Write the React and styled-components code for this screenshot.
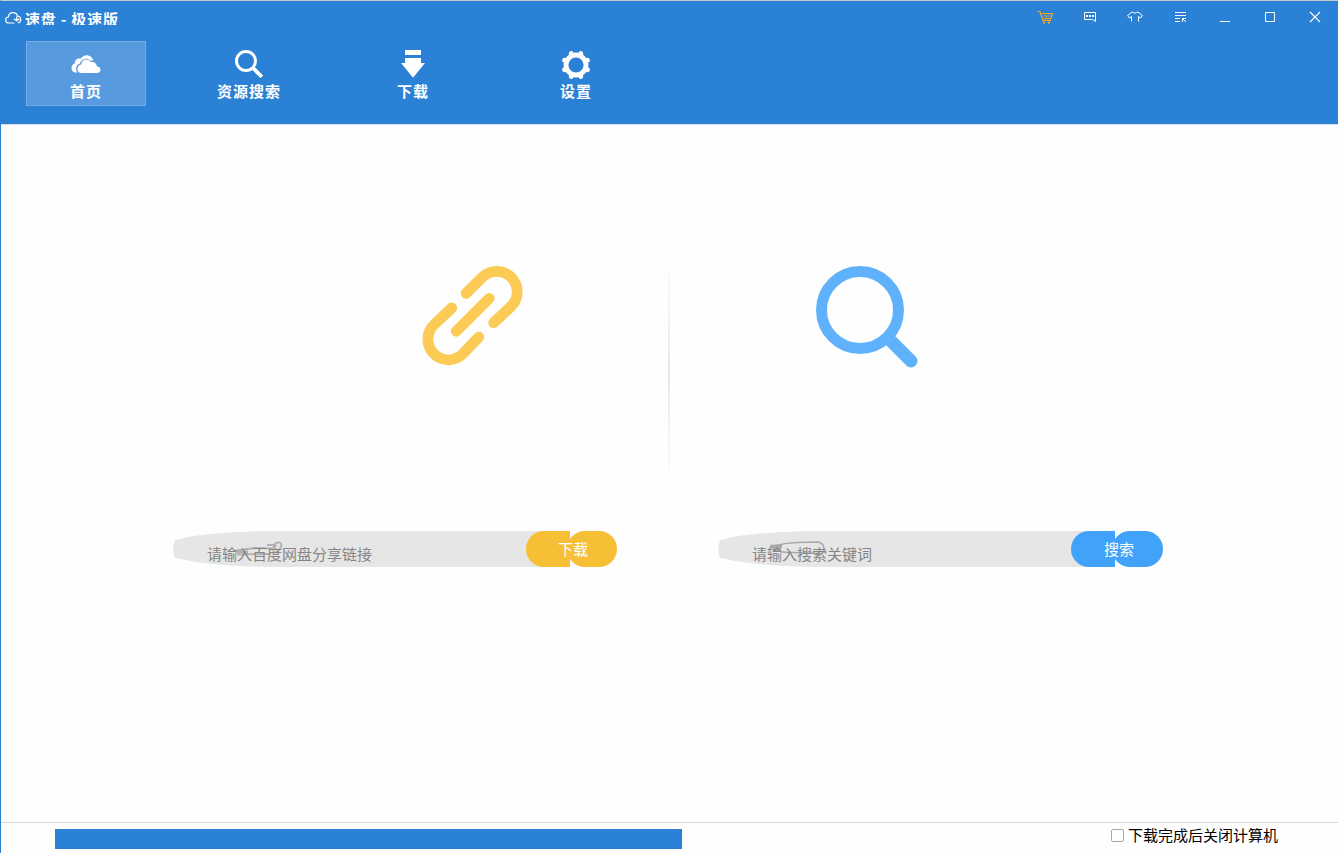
import React from "react";
import styled, { createGlobalStyle } from "styled-components";

const GlobalStyle = createGlobalStyle`
  * { box-sizing: border-box; }
  body { margin: 0; background: #fff; overflow: hidden; }
  button, input { font: inherit; }
`;

const Window = styled.div`
  width: 100vw;
  height: 100vh;
  display: flex;
  flex-direction: column;
  border-top: 1px solid #c4c8ca;
  border-left: 1px solid #2b81d5;
  background: #fefefe;
  font-family: "Noto Sans CJK SC", sans-serif;
  font-size: 15px;
`;

const Header = styled.header`
  height: 124px;
  flex: none;
  background: #2b81d5;
  border-bottom: 1px solid #d5dce3;
  color: #fff;
`;

const TitleBar = styled.div`
  height: 40px;
  display: flex;
  justify-content: space-between;
`;

const Brand = styled.div`
  display: flex;
  align-items: flex-start;
  padding: 10px 0 0 4px;
  svg { margin-right: 3px; }
`;

const Title = styled.span`
  height: 14px;
  overflow: hidden;
  font-size: 15px;
  font-weight: 700;
  line-height: 16px;
  letter-spacing: 0.8px;
  white-space: pre;
`;

const WindowTools = styled.div`
  display: flex;
  height: 32px;
  padding-right: 1px;
`;

const ToolButton = styled.button`
  width: 45px;
  height: 32px;
  padding: 0;
  border: 0;
  background: none;
  color: ${(p) => p.$color || "#fff"};
  display: flex;
  align-items: center;
  justify-content: center;
`;

const Nav = styled.nav`
  display: flex;
  gap: 43px;
  padding-left: 25px;
`;

const Tab = styled.button`
  width: ${(p) => p.$width || 120}px;
  height: 65px;
  padding: 8px 0 0;
  display: flex;
  flex-direction: column;
  align-items: center;
  border: 1px solid ${(p) => (p.$active ? "#73ade5" : "transparent")};
  background: ${(p) => (p.$active ? "#579bde" : "transparent")};
  color: #fff;
`;

const TabLabel = styled.span`
  margin-top: ${(p) => p.$drop || 0}px;
  padding-left: ${(p) => p.$nudge || 0}px;
  font-size: 15px;
  font-weight: 700;
  line-height: 22px;
  letter-spacing: 1px;
`;

const Content = styled.main`
  flex: 1;
  display: grid;
  grid-template-columns: 667px 1px 1fr;
`;

const Panel = styled.section`
  display: flex;
  flex-direction: column;
  padding-top: 140px;
  padding-left: ${(p) => p.$left}px;
`;

const Emblem = styled.div`
  height: 106px;
  margin-left: ${(p) => p.$shift}px;
`;

const Divider = styled.div`
  height: 204px;
  margin-top: 144px;
  width: 2px;
  background: linear-gradient(#fbfbfb, #e8e8e8 50%, #fbfbfb);
`;

const Form = styled.form`
  display: flex;
  height: 36px;
  margin-top: 160px;
`;

const Field = styled.label`
  position: relative;
  width: 397px;
  height: 36px;
  margin-right: -44px;
  padding: 11px 0 0 34px;
  background: #e6e6e6;
  clip-path: path("M2 9 L6 8.5 L12 6.5 L24 4.5 L40 2.8 L60 1.2 L78 .4 L98 0 H397 V36 H98 L78 35.5 L60 34.7 L40 33 L24 31 L12 29 L6 27.5 L2 27 Q-1.5 18 2 9Z");
`;

const Hint = styled.span`
  position: relative;
  display: block;
  color: #858585;
  font-size: 15px;
  line-height: 24px;
`;

const FieldMark = styled.svg`
  position: absolute;
  left: 51px;
  top: 9px;
`;

const Submit = styled.button`
  position: relative;
  width: ${(p) => p.$width}px;
  height: 36px;
  padding: 0 0 0 ${(p) => p.$inset}px;
  border: 0;
  color: #fff;
  background: none;
  line-height: 36px;
  &::before, &::after {
    content: "";
    position: absolute;
    top: 0;
    bottom: 0;
    background: ${(p) => p.$color};
  }
  &::before { left: 0; width: 44px; border-radius: 18px 0 0 18px; }
  &::after { left: 41px; right: 0; border-radius: 18px; }
  span { position: relative; z-index: 1; }
`;

const Footer = styled.footer`
  height: 31px;
  flex: none;
  display: flex;
  justify-content: space-between;
  border-top: 1px solid #d6d6d6;
  padding: 0 60px 0 54px;
`;

const Progress = styled.div`
  width: 627px;
  height: 20px;
  margin-top: 6px;
  background: #2b81d5;
`;

const Shutdown = styled.label`
  display: flex;
  height: 25px;
  align-items: flex-start;
  gap: 4px;
  color: #000;
  line-height: 24px;
`;

const Checkbox = styled.input`
  appearance: none;
  width: 13px;
  height: 13px;
  margin: 6px 0 0;
  border: 1px solid #a8a8a8;
  border-radius: 2px;
  background: #fff;
`;

const Clouds = () => (
  <svg width="32" height="28" viewBox="0 0 32 28" fill="currentColor">
    <path d="M7.500 22.500H6C3 22.500 1.500 20.600 1.500 17.900c0-2.300 1.300-3.900 3.300-4.400C4.700 10.500 6.600 8.500 9.500 8.500c.4 0 .8 0 1.200.2C12 6.400 14 5.200 16.500 5.200c3.500 0 6 2.200 6.800 5.400-1.400-.3-2.300-.2-3.200.2C18.900 9.100 17 8.600 15 8.900c-2.600.4-4.200 2-5 4.500-2.500.7-3.900 2.400-3.900 5 0 1.700.5 3 1.400 4.100z" />
    <path d="M11.500 23C8.900 23 7.400 21.300 7.400 19c0-2.400 1.500-4.100 3.800-4.400.3-3 2.200-5 5.100-5 2 0 3.600.9 4.600 2.500 3.100-.9 5.700 1 5.900 4.200 2.300.3 3.700 1.500 3.700 3.500 0 1.900-1.300 3.200-3.300 3.200z" />
  </svg>
);

const SearchGlyph = () => (
  <svg width="32" height="28" viewBox="0 0 32 28" fill="none" stroke="currentColor">
    <circle cx="13" cy="11" r="9.500" strokeWidth="3" />
    <path d="M19.500 17.500 28.800 26.800" strokeWidth="3.800" />
  </svg>
);

const DownloadGlyph = () => (
  <svg width="32" height="28" viewBox="0 0 32 28" fill="currentColor">
    <path d="M8 0h16v5H8zM8 8h16v5h4L16 27.800 4 13h4z" />
  </svg>
);

const teeth = [22.5, 67.5, 112.5, 157.5, 202.5, 247.5, 292.5, 337.5];
const GearGlyph = () => (
  <svg width="32" height="30" viewBox="0 0 32 30" fill="none" stroke="currentColor">
    <circle cx="16" cy="15" r="10" strokeWidth="4.800" />
    {teeth.map((angle) => (
      <path key={angle} d="M16 4V2.600" strokeWidth="4.800" strokeLinecap="round" transform={`rotate(${angle} 16 15)`} />
    ))}
  </svg>
);

const LinkGlyph = () => (
  <svg width="102" height="102" viewBox="0 0 102 102" fill="none" stroke="#fccb56" strokeWidth="10.800" strokeLinecap="round">
    <path d="M44 28.300 60.200 12.300A20.500 20.500 0 0 1 89.200 41.300L71.700 57.700" />
    <path d="M29.700 43 11.900 59.800A20.500 20.500 0 0 0 40.900 88.800L56.700 72.200" />
    <path d="M34.300 66.300 67.300 33.300" />
  </svg>
);

const LensGlyph = () => (
  <svg width="104" height="104" viewBox="0 0 104 104" fill="none" stroke="#60b1fc">
    <circle cx="45" cy="45" r="38.500" strokeWidth="11" />
    <path d="M73 73 96 96" strokeWidth="13" strokeLinecap="round" />
  </svg>
);

export default function App() {
  return (
    <>
      <GlobalStyle />
      <Window>
        <Header>
          <TitleBar>
            <Brand>
              <svg width="17" height="14" viewBox="0 0 17 14" fill="none" stroke="currentColor" strokeWidth="1.200">
                <path d="M9.500 12H4C1.800 12 .7 10.500.7 8.900c0-1.700 1.100-2.700 2.700-2.900C3.700 3.200 5.400 1.600 8 1.600c2.300 0 4 1.300 4.500 3.500 2 .2 3.200 1.400 3.200 3.400 0 1.900-1 3.200-2.700 3.500" />
                <path d="M11.700 5.500v4M9 7.700l2.700 2.300 2.600-2.300" />
              </svg>
              <Title>速盘 - 极速版</Title>
            </Brand>
            <WindowTools>
              <ToolButton $color="#f7a823" aria-label="cart">
                <svg width="16" height="14" viewBox="0 0 16 14" fill="none" stroke="currentColor" strokeWidth="1.200">
                  <path d="M.5 1.500H3L6 10.500h7.200L15.300 3.500H5M6.500 6h6.500M7 8.500h5.500" />
                  <path d="M6 12.500h2M11 12.500h2" strokeWidth="2" />
                </svg>
              </ToolButton>
              <ToolButton aria-label="messages">
                <svg width="14" height="14" viewBox="0 0 14 14" fill="none" stroke="currentColor">
                  <path d="M1.500 2.500h11v9l-3-2h-8z" />
                  <path d="M3 6h2M6 6h2M9 6h2" strokeWidth="2" />
                </svg>
              </ToolButton>
              <ToolButton aria-label="skin">
                <svg width="16" height="14" viewBox="0 0 16 14" fill="none" stroke="currentColor">
                  <path d="M4.500 11.500v-5L2.500 8 .6 5.500 5 2l1.500.5Q8 4 9.500 2.500L11 2l4.400 3.500L13.500 8l-2-1.500v5" />
                </svg>
              </ToolButton>
              <ToolButton aria-label="menu">
                <svg width="14" height="14" viewBox="0 0 14 14" fill="none" stroke="currentColor">
                  <path d="M2 2.500h11M2 5.500h11M2 8.500h5M2 11.500h5M9.500 12V8.500H13M9.500 8.500l3.500 3.500" />
                </svg>
              </ToolButton>
              <ToolButton aria-label="minimize">
                <svg width="13" height="14" viewBox="0 0 13 14" fill="none" stroke="currentColor">
                  <path d="M2 11.500h10" />
                </svg>
              </ToolButton>
              <ToolButton aria-label="maximize">
                <svg width="13" height="14" viewBox="0 0 13 14" fill="none" stroke="currentColor">
                  <path d="M2.500 2.500h9v9h-9z" />
                </svg>
              </ToolButton>
              <ToolButton aria-label="close">
                <svg width="13" height="14" viewBox="0 0 13 14" fill="none" stroke="currentColor" strokeWidth="1.100">
                  <path d="M2 2l10 10M12 2 2 12" />
                </svg>
              </ToolButton>
            </WindowTools>
          </TitleBar>
          <Nav>
            <Tab $active><Clouds /><TabLabel $drop={2}>首页</TabLabel></Tab>
            <Tab><SearchGlyph /><TabLabel $drop={2}>资源搜索</TabLabel></Tab>
            <Tab $width={121}><DownloadGlyph /><TabLabel $drop={2} $nudge={1}>下载</TabLabel></Tab>
            <Tab><GearGlyph /><TabLabel>设置</TabLabel></Tab>
          </Nav>
        </Header>
        <Content>
          <Panel $left={172}>
            <Emblem $shift={249}><LinkGlyph /></Emblem>
            <Form onSubmit={(e) => e.preventDefault()}>
              <Field>
                <FieldMark width="60" height="18" viewBox="0 0 60 18" fill="none" stroke="#b0b0b0" strokeWidth="1.800">
                  <path d="M43 5h7q2-3 5-2.500 3.500 1 2 4.500-2 4-6 5.500M49 8q1-3 4-2M9 11 31 8l18 .5M13 14.500l34-.5" />
                  <path d="M12 12h12" strokeWidth="3" />
                </FieldMark>
                <Hint>请输入百度网盘分享链接</Hint>
              </Field>
              <Submit $color="#f7bf35" $width={91} $inset={3}><span>下载</span></Submit>
            </Form>
          </Panel>
          <Divider />
          <Panel $left={49}>
            <Emblem $shift={97}><LensGlyph /></Emblem>
            <Form onSubmit={(e) => e.preventDefault()}>
              <Field>
                <FieldMark width="60" height="18" viewBox="0 0 60 18" fill="none" stroke="#a9a9a9" strokeWidth="1.700">
                  <path d="M4 6Q16 3 28 2.500L49 2q6 1 6 7v3q-2 2-6 1.500L12 12" />
                  <path d="M1 6.500h12M4 9.500h8" strokeWidth="3.500" />
                </FieldMark>
                <Hint>请输入搜索关键词</Hint>
              </Field>
              <Submit $color="#41a2f9" $width={92} $inset={4}><span>搜索</span></Submit>
            </Form>
          </Panel>
        </Content>
        <Footer>
          <Progress />
          <Shutdown><Checkbox type="checkbox" />下载完成后关闭计算机</Shutdown>
        </Footer>
      </Window>
    </>
  );
}
